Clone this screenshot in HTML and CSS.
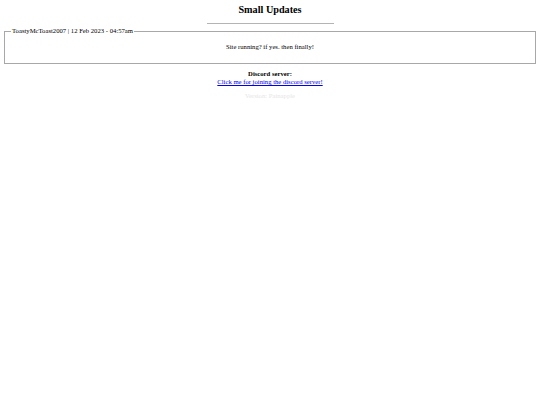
FILE: index.html
```html
<!DOCTYPE html>
<html>
<head>
<meta charset="utf-8">
<link rel="stylesheet" href="styles.css">
</head>
<body>
<h2 class="title">Small Updates</h2>
<hr class="rule">
<fieldset class="post">
<legend class="post-head">ToastyMcToast2007 | 12 Feb 2023 - 04:57am</legend>
<p class="post-body">Site running? if yes. then finally!</p>
</fieldset>
<div class="discord">
<b class="discord-label">Discord server:</b><br>
<a class="discord-link" href="#">Click me for joining the discord server!</a>
</div>
<p class="version">Version: Painapple</p>
</body>
</html>
```
FILE: styles.css
```css
html, body {
  background: #fff;
}
body {
  margin: 4px;
  font-family: "Liberation Serif", "Times New Roman", serif;
  font-size: 6.67px;
  color: #000;
}
.title {
  font-size: 10.2px;
  font-weight: bold;
  text-align: center;
  margin: 0;
  line-height: 11px;
}
.rule {
  width: 127px;
  margin: 8px auto 3px;
  border: none;
  border-top: 1px solid #b4b4b4;
  height: 0;
}
.post {
  margin: 0;
  border: 1px solid #a8a8a8;
  padding: 0 5px 12px;
}
.post-head {
  padding: 0 1px;
  margin-left: 1px;
  line-height: 8px;
}
.post-body {
  text-align: center;
  margin: 8px 0 0;
  line-height: 8px;
}
.discord {
  text-align: center;
  margin-top: 6px;
  line-height: 8px;
}
.discord-link {
  color: #0000ee;
}
.version {
  text-align: center;
  color: #e6e6e6;
  margin: 6px 0 0;
  line-height: 8px;
}
```
